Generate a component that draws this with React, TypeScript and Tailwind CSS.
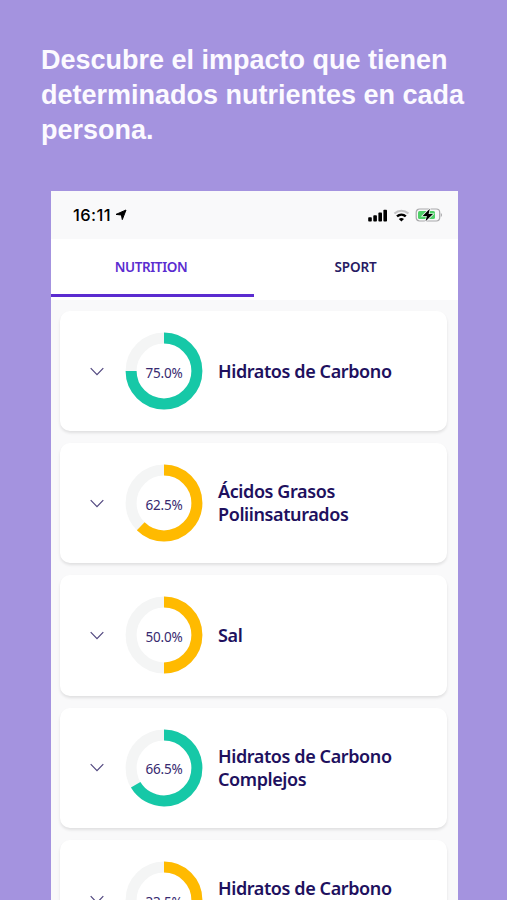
type Nutrient = {
  lines: string[];
  percent: number;
  tone: 'green' | 'amber';
};

const nutrients: Nutrient[] = [
  { lines: ['Hidratos de Carbono'], percent: 75, tone: 'green' },
  { lines: ['Ácidos Grasos', 'Poliinsaturados'], percent: 62.5, tone: 'amber' },
  { lines: ['Sal'], percent: 50, tone: 'amber' },
  { lines: ['Hidratos de Carbono', 'Complejos'], percent: 66.5, tone: 'green' },
  { lines: ['Hidratos de Carbono', 'Simples'], percent: 33.5, tone: 'amber' },
];

export default function App() {
  return (
    <div className="h-[900px] w-[507px] overflow-hidden bg-[#a493df] flex flex-col">
      <h1 className="h-[191px] shrink-0 pl-[41px] pt-[43px] font-['Liberation_Sans',Arial,sans-serif] text-[27px] font-bold leading-[35px] text-[#fcfaff] whitespace-nowrap">
        Descubre el impacto que tienen
        <br />
        determinados nutrientes en cada
        <br />
        persona.
      </h1>

      {/* Phone screen */}
      <div className="ml-[51px] flex w-[407px] flex-1 min-h-0 flex-col overflow-hidden bg-[#f9f9fa] font-['Noto_Sans',sans-serif]">
        <StatusBar />
        <Tabs />
        <ul className="flex flex-col gap-[12px] pl-[9px] pt-[11px]">
          {nutrients.map((item, i) => (
            <NutrientCard key={i} item={item} />
          ))}
        </ul>
      </div>
    </div>
  );
}

function StatusBar() {
  return (
    <div className="flex h-[48px] shrink-0 items-center justify-between pl-[22px] pr-[15px] font-['Inter',sans-serif] text-black">
      <div className="flex items-center gap-[4px]">
        <span className="text-[16.5px] font-medium leading-none tracking-[0.4px]">16:11</span>
        <svg className="h-[12px] w-[12px]" viewBox="0 0 12 12">
          <path
            d="M11 1 7.3 10.6 6.4 6 1 5.4z"
            fill="currentColor"
            stroke="currentColor"
            strokeWidth="1"
            strokeLinejoin="round"
          />
        </svg>
      </div>
      <div className="flex items-center gap-[6px]">
        {/* Signal */}
        <svg className="h-[13px] w-[20px]" viewBox="0 0 20 13">
          <rect x="1.2" y="8.3" width="3.6" height="4.2" rx="0.8" />
          <rect x="6.3" y="6.3" width="3.6" height="6.2" rx="0.8" />
          <rect x="11.4" y="3.6" width="3.6" height="8.9" rx="0.8" />
          <rect x="16.4" y="0.8" width="3.6" height="11.7" rx="0.8" />
        </svg>
        {/* Wifi */}
        <svg className="h-[13px] w-[16px]" viewBox="0 0 16 13" fill="none">
          <path d="M1.4 4.4c4-3.7 10-3.7 14 0" stroke="#c4c4c6" strokeWidth="2" />
          <path d="M4 7.4c2.500-2.300 6.300-2.300 8.800 0" stroke="#000" strokeWidth="2.4" />
          <path d="M8.400 12.600 5.800 10c1.500-1.300 3.700-1.300 5.200 0z" fill="#000" />
        </svg>
        {/* Battery */}
        <svg className="h-[14px] w-[28px]" viewBox="0 0 28 14" fill="none">
          <rect x="1.2" y="1" width="23.5" height="12" rx="3.4" stroke="#a9a9ab" strokeWidth="1.2" />
          <rect x="3" y="3" width="17" height="8" rx="1.6" fill="#4fd069" />
          <path d="M25.8 5v4c1.600-.5 1.600-3.500 0-4z" fill="#a9a9ab" />
          <path
            d="M14.800.8 7.600 7.900h4.200l-1.200 5.400 7.400-7.200h-4.400z"
            fill="#000"
            stroke="#f9f9fa"
            strokeWidth="1.4"
            paintOrder="stroke"
          />
        </svg>
      </div>
    </div>
  );
}

function Tabs() {
  return (
    <div className="flex h-[61px] shrink-0 bg-white text-[13.5px] font-semibold">
      <button
        type="button"
        className="flex h-[58px] w-[203px] items-center justify-center border-b-[3px] border-[#5b2cd0] pt-px pr-[3px] tracking-[-0.4px] text-[#5b2cd0]"
      >
        NUTRITION
      </button>
      <button
        type="button"
        className="flex h-[58px] w-[204px] items-center justify-center border-b-[3px] border-transparent pt-px pr-px tracking-[-0.1px] text-[#271a63]"
      >
        SPORT
      </button>
    </div>
  );
}

function NutrientCard({ item }: { item: Nutrient }) {
  return (
    <li className="flex h-[120.2px] w-[387px] shrink-0 items-center rounded-[10px] bg-white pl-[30px] shadow-[0_2px_3px_rgba(0,0,0,0.1)]">
      <svg className="h-[9px] w-[14px]" viewBox="0 0 14 9" fill="none">
        <path d="m.7 1.200 6.300 6.500 6.300-6.500" stroke="#51477f" strokeWidth="1.2" />
      </svg>
      <div className="ml-[21px] grid place-items-center">
        <Ring percent={item.percent} tone={item.tone} />
        <span className="col-start-1 row-start-1 pt-[5px] text-[13.5px] tracking-[-0.2px] leading-none text-[#372a70]">
          {item.percent.toFixed(1)}%
        </span>
      </div>
      <div className="ml-[15px] text-[18px] font-semibold leading-[23px] tracking-[-0.4px] whitespace-nowrap text-[#20105e]">
        {item.lines.map((line) => (
          <div key={line}>{line}</div>
        ))}
      </div>
    </li>
  );
}

function Ring({ percent, tone }: { percent: number; tone: Nutrient['tone'] }) {
  return (
    <svg className="col-start-1 row-start-1 h-[78px] w-[78px]" viewBox="0 0 78 78" fill="none">
      <circle cx="39" cy="39" r="32.9" stroke="#f4f5f5" strokeWidth="11" />
      <circle
        cx="39"
        cy="39"
        r="32.9"
        stroke={tone === 'green' ? '#16c8a7' : '#ffba00'}
        strokeWidth="11"
        pathLength={100}
        strokeDasharray={`${percent} 100`}
        transform="rotate(-90 39 39)"
      />
    </svg>
  );
}
